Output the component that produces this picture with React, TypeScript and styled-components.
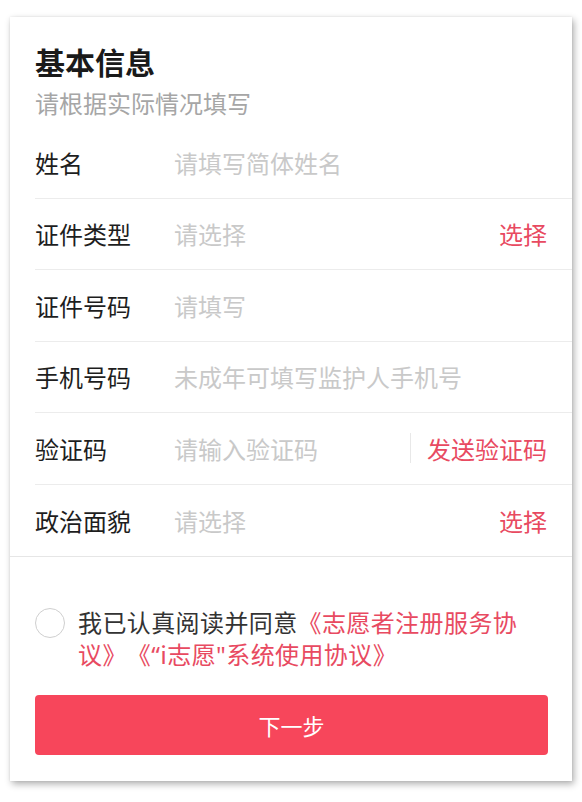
import React from "react";
import styled, { createGlobalStyle } from "styled-components";

const RED = "#e84a61";

const GlobalStyle = createGlobalStyle`
  html, body {
    margin: 0;
    padding: 0;
    background: #ffffff;
  }
  body {
    font-family: "Noto Sans CJK SC", "Noto Sans", sans-serif;
  }
  * {
    box-sizing: border-box;
  }
`;

const Page = styled.div`
  padding: 17px 10px 20px 10px;
`;

const Card = styled.div`
  width: 562px;
  background: #ffffff;
  box-shadow: 2px 3px 7px rgba(0, 0, 0, 0.32), 0 0 2px rgba(0, 0, 0, 0.08);
  padding: 24px 0 26px 0;
`;

const Header = styled.div`
  padding: 0 25px;
`;

const Title = styled.h1`
  margin: 0;
  font-size: 30px;
  line-height: 40px;
  font-weight: 700;
  color: #1a1a1a;
`;

const Subtitle = styled.p`
  margin: 6px 0 0 0;
  font-size: 24px;
  line-height: 32px;
  color: #a6a6a6;
`;

const FieldList = styled.div`
  margin-top: 8px;
  border-bottom: 1px solid #e6e6e6;
`;

const FieldRow = styled.div`
  display: flex;
  align-items: center;
  height: 71.5px;
  margin-left: 25px;
  padding-right: 25px;
  border-bottom: 1px solid #ececec;

  &:last-child {
    border-bottom: none;
  }
`;

const Label = styled.label`
  flex: 0 0 139px;
  font-size: 24px;
  color: #1e1e1e;
`;

const Input = styled.input`
  flex: 1;
  min-width: 0;
  border: none;
  outline: none;
  padding: 0;
  background: transparent;
  font-family: inherit;
  font-size: 24px;
  color: #333;

  &::placeholder {
    color: #c9c9c9;
  }
`;

const Action = styled.span`
  font-size: 24px;
  color: ${RED};
  white-space: nowrap;
`;

const Divider = styled.span`
  width: 1px;
  height: 30px;
  background: #e8e8e8;
  margin-right: 16px;
`;

const Agreement = styled.div`
  display: flex;
  align-items: flex-start;
  margin: 49px 25px 0 25px;
`;

const Radio = styled.span`
  flex: 0 0 30px;
  width: 30px;
  height: 30px;
  margin-top: 2px;
  margin-right: 13px;
  border-radius: 50%;
  border: 1.5px solid #cfcfcf;
`;

const AgreementText = styled.p`
  margin: 0;
  font-size: 24px;
  line-height: 32px;
  letter-spacing: 0.4px;
  color: #333333;
  text-spacing-trim: space-all;
`;

const Link = styled.span`
  color: ${RED};
`;

const Quote = styled.span`
  font-family: "Noto Sans", sans-serif;
`;

const NextButton = styled.button`
  display: block;
  width: 513px;
  height: 60px;
  margin: 24px 25px 0 25px;
  border: none;
  border-radius: 4px;
  background: #f7465b;
  color: #ffffff;
  font-family: inherit;
  font-size: 22px;
`;

type Field = {
  label: string;
  placeholder: string;
  action?: string;
  divider?: boolean;
};

const fields: Field[] = [
  { label: "姓名", placeholder: "请填写简体姓名" },
  { label: "证件类型", placeholder: "请选择", action: "选择" },
  { label: "证件号码", placeholder: "请填写" },
  { label: "手机号码", placeholder: "未成年可填写监护人手机号" },
  { label: "验证码", placeholder: "请输入验证码", action: "发送验证码", divider: true },
  { label: "政治面貌", placeholder: "请选择", action: "选择" },
];

export default function App() {
  return (
    <>
      <GlobalStyle />
      <Page>
        <Card>
          <Header>
            <Title>基本信息</Title>
            <Subtitle>请根据实际情况填写</Subtitle>
          </Header>
          <FieldList>
            {fields.map((f) => (
              <FieldRow key={f.label}>
                <Label>{f.label}</Label>
                <Input placeholder={f.placeholder} readOnly={!!f.action && !f.divider} />
                {f.divider && <Divider />}
                {f.action && <Action>{f.action}</Action>}
              </FieldRow>
            ))}
          </FieldList>
          <Agreement>
            <Radio />
            <AgreementText>
              我已认真阅读并同意
              <Link>
                《志愿者注册服务协议》《<Quote>“</Quote>i志愿<Quote>"</Quote>系统使用协议》
              </Link>
            </AgreementText>
          </Agreement>
          <NextButton>下一步</NextButton>
        </Card>
      </Page>
    </>
  );
}
